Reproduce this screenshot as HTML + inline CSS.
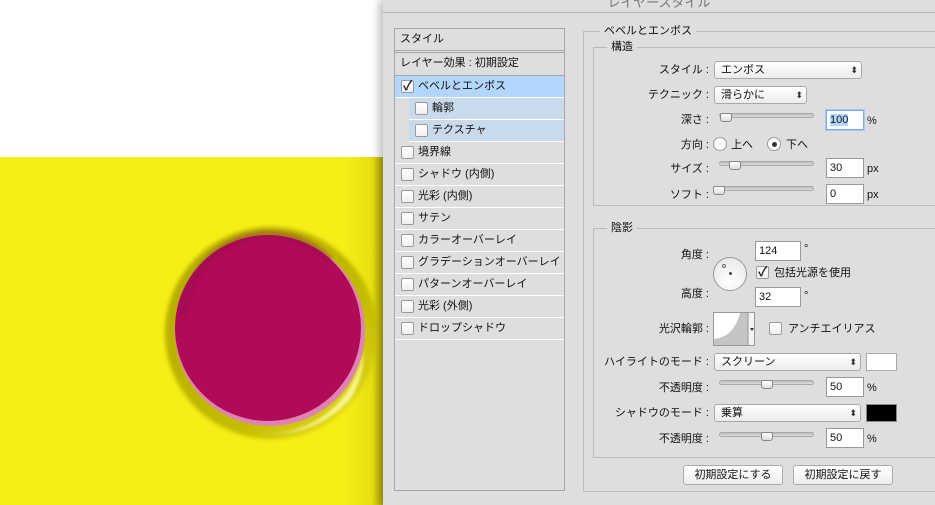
<!DOCTYPE html>
<html><head><meta charset="utf-8"><style>
*{margin:0;padding:0;box-sizing:border-box}
body{width:935px;height:505px;position:relative;overflow:hidden;background:#fff;font-family:"Liberation Sans","Noto Sans CJK JP",sans-serif;font-size:11px;color:#111}
.a{position:absolute}
#yel{left:0;top:157px;width:383px;height:348px;background:linear-gradient(90deg,#f7ee16 0,#f7ee16 345px,#e8df10 372px,#b8b000 383px)}
#dlg{left:383px;top:0;width:552px;height:505px;background:#dedede;box-shadow:-4px 0 8px rgba(0,0,0,.25)}
.title{left:0;top:0;width:552px;height:13px;border-bottom:1px solid #b5b5b5;text-align:center;font-size:13px;line-height:6px;color:#777;overflow:hidden}
#list{left:11px;top:28px;width:171px;height:463px;border:1px solid #a6a6a6;background:#dedede}
.row{position:absolute;left:0;width:169px;height:22px;border-bottom:1px solid #fff;line-height:21px;font-size:11px}
.cb{position:absolute;width:13px;height:13px;border:1px solid #9a9a9a;border-radius:2px;background:linear-gradient(#fff,#f0f0f0);top:4px}
.fs{border:1px solid #bbb}
.lg{position:absolute;background:#dedede;padding:0 4px;font-size:11px;line-height:12px}
.lbl{position:absolute;text-align:right;width:130px;font-size:11px;line-height:14px}
.sel{position:absolute;height:18px;border:1px solid #a9a9a9;border-radius:3px;background:linear-gradient(#fff,#ececec);font-size:11px;line-height:16px;padding-left:6px}
.sel:after{content:"⬍";position:absolute;right:3px;top:0;font-size:9px;color:#333}
.inp{position:absolute;height:20px;border:1px solid #999;background:#fff;font-size:11px;line-height:18px;padding-left:3px}
.sl{position:absolute;height:5px;border:1px solid #aaa;border-radius:3px;background:linear-gradient(#bbb,#ddd)}
.th{position:absolute;width:12px;height:9px;border:1px solid #888;border-radius:2px 2px 3px 3px;background:linear-gradient(#fff,#ddd)}
.u{position:absolute;font-size:11px;line-height:14px}
.btn{position:absolute;height:20px;border:1px solid #aaa;border-radius:3px;background:linear-gradient(#fff,#eee);text-align:center;line-height:18px;font-size:11px}
.rad{position:absolute;width:14px;height:14px;border:1px solid #999;border-radius:50%;background:#fff}
.ck{position:absolute;font-size:13px;line-height:13px;font-weight:bold;color:#222}
</style></head><body>
<div class="a" id="yel"></div>
<svg class="a" style="left:150px;top:210px" width="240" height="240">
<defs>
<filter id="b" x="-20%" y="-20%" width="140%" height="140%"><feGaussianBlur stdDeviation="2"/></filter>
<filter id="b2" x="-20%" y="-20%" width="140%" height="140%"><feGaussianBlur stdDeviation="1.5"/></filter>
<linearGradient id="o" x1="0" y1="0" x2="1" y2="1"><stop offset="0" stop-color="#b0a800"/><stop offset=".65" stop-color="#c4bc00"/><stop offset="1" stop-color="#e6de20"/></linearGradient>
</defs>
<circle cx="121" cy="123" r="106" fill="url(#o)" filter="url(#b)"/>
<path d="M213 140 A96 96 0 0 1 100 222 Q160 232 200 190 Q215 165 213 140Z" fill="#fbf690" filter="url(#b2)"/>
<circle cx="120" cy="121" r="95" fill="#e083b4"/>
<circle cx="118" cy="118" r="93" fill="#b00b57"/>
<path d="M34 108 A85 85 0 0 1 180 50" stroke="#8f0848" stroke-width="7" fill="none" opacity=".35" filter="url(#b2)"/>
</svg>
<div class="a" id="dlg">
<div class="a title">レイヤースタイル</div>
<div class="a" id="list">
<div class="row" style="top:0;height:24px;border-bottom:3px double #a6a6a6;padding-left:5px">スタイル</div>
<div class="row" style="top:24px;height:23px;border-bottom:1px solid #a6a6a6;padding-left:5px">レイヤー効果 : 初期設定</div>
<div class="row" style="top:47px;background:#b3d6fd;padding-left:23px"><div class="cb" style="left:6px"></div><span class="ck" style="left:8px;top:3px">✓</span>ベベルとエンボス</div>
<div class="row" style="top:69px;background:#c9daed;left:14px;width:155px;padding-left:23px"><div class="cb" style="left:6px"></div>輪郭</div>
<div class="row" style="top:91px;background:#c9daed;left:14px;width:155px;padding-left:23px"><div class="cb" style="left:6px"></div>テクスチャ</div>
<div class="row" style="top:113px;padding-left:23px"><div class="cb" style="left:6px"></div>境界線</div>
<div class="row" style="top:135px;padding-left:23px"><div class="cb" style="left:6px"></div>シャドウ (内側)</div>
<div class="row" style="top:157px;padding-left:23px"><div class="cb" style="left:6px"></div>光彩 (内側)</div>
<div class="row" style="top:179px;padding-left:23px"><div class="cb" style="left:6px"></div>サテン</div>
<div class="row" style="top:201px;padding-left:23px"><div class="cb" style="left:6px"></div>カラーオーバーレイ</div>
<div class="row" style="top:223px;padding-left:23px"><div class="cb" style="left:6px"></div>グラデーションオーバーレイ</div>
<div class="row" style="top:245px;padding-left:23px"><div class="cb" style="left:6px"></div>パターンオーバーレイ</div>
<div class="row" style="top:267px;padding-left:23px"><div class="cb" style="left:6px"></div>光彩 (外側)</div>
<div class="row" style="top:289px;padding-left:23px"><div class="cb" style="left:6px"></div>ドロップシャドウ</div>
</div>
<div class="a fs" style="left:200px;top:31px;width:360px;height:461px"></div>
<div class="lg" style="left:217px;top:25px">ベベルとエンボス</div>
<div class="a fs" style="left:210px;top:47px;width:350px;height:159px"></div>
<div class="lg" style="left:224px;top:41px">構造</div>
<div class="a fs" style="left:210px;top:228px;width:350px;height:230px"></div>
<div class="lg" style="left:224px;top:222px">陰影</div>
</div>
<div class="lbl" style="left:579px;top:63px">スタイル :</div>
<div class="sel" style="left:714px;top:61px;width:148px">エンボス</div>
<div class="lbl" style="left:579px;top:88px">テクニック :</div>
<div class="sel" style="left:714px;top:86px;width:93px">滑らかに</div>
<div class="lbl" style="left:579px;top:113px">深さ :</div>
<div class="sl" style="left:719px;top:113px;width:95px"></div><div class="th" style="left:720px;top:113px"></div>
<div class="inp" style="left:826px;top:110px;width:38px;border-color:#7aaaf0;box-shadow:0 0 0 1px #a8c8f5"><span style="background:#b3d6fd">100</span></div><div class="u" style="left:867px;top:114px">%</div>
<div class="lbl" style="left:579px;top:138px">方向 :</div>
<div class="rad" style="left:713px;top:137px"></div><div class="u" style="left:731px;top:138px">上へ</div>
<div class="rad" style="left:767px;top:137px"></div><div class="a" style="left:772px;top:142px;width:5px;height:5px;border-radius:50%;background:#333"></div><div class="u" style="left:786px;top:138px">下へ</div>
<div class="lbl" style="left:579px;top:162px">サイズ :</div>
<div class="sl" style="left:719px;top:161px;width:95px"></div><div class="th" style="left:729px;top:161px"></div>
<div class="inp" style="left:826px;top:158px;width:38px">30</div><div class="u" style="left:867px;top:162px">px</div>
<div class="lbl" style="left:579px;top:188px">ソフト :</div>
<div class="sl" style="left:719px;top:186px;width:95px"></div><div class="th" style="left:713px;top:186px"></div>
<div class="inp" style="left:826px;top:184px;width:38px">0</div><div class="u" style="left:867px;top:188px">px</div>

<div class="lbl" style="left:579px;top:248px">角度 :</div>
<div class="inp" style="left:755px;top:241px;width:46px">124</div><div class="u" style="left:804px;top:242px">°</div>
<div class="a" style="left:713px;top:257px;width:34px;height:34px;border:1px solid #999;border-radius:50%;background:radial-gradient(circle at 50% 70%,#fff,#e4e4e4)"></div>
<div class="a" style="left:722px;top:264px;width:4px;height:4px;border:1px solid #666;border-radius:50%"></div>
<div class="a" style="left:729px;top:272px;width:3px;height:3px;background:#444;border-radius:50%"></div>
<div class="cb" style="left:756px;top:266px"></div><span class="ck" style="left:758px;top:265px">✓</span><div class="u" style="left:774px;top:266px">包括光源を使用</div>
<div class="lbl" style="left:579px;top:287px">高度 :</div>
<div class="inp" style="left:755px;top:287px;width:46px">32</div><div class="u" style="left:804px;top:289px">°</div>
<div class="lbl" style="left:579px;top:322px">光沢輪郭 :</div>
<div class="a" style="left:713px;top:312px;width:42px;height:34px;border:1px solid #999;background:#fff;overflow:hidden"><svg width="42" height="34"><path d="M0 34 L0 26 Q20 24 26 0 L34 0 L34 34Z" fill="#c4c4c4"/><rect x="34" y="0" width="8" height="34" fill="#f4f4f4"/><line x1="34" y1="0" x2="34" y2="34" stroke="#999"/><path d="M36 15 l4 0 l-2 3z" fill="#333"/></svg></div>
<div class="cb" style="left:769px;top:322px"></div><div class="u" style="left:788px;top:322px">アンチエイリアス</div>
<div class="lbl" style="left:579px;top:355px">ハイライトのモード :</div>
<div class="sel" style="left:714px;top:353px;width:147px">スクリーン</div>
<div class="a" style="left:866px;top:353px;width:31px;height:18px;border:1px solid #aaa;background:#fff"></div>
<div class="lbl" style="left:579px;top:381px">不透明度 :</div>
<div class="sl" style="left:719px;top:380px;width:95px"></div><div class="th" style="left:761px;top:380px"></div>
<div class="inp" style="left:826px;top:377px;width:38px">50</div><div class="u" style="left:867px;top:381px">%</div>
<div class="lbl" style="left:579px;top:406px">シャドウのモード :</div>
<div class="sel" style="left:714px;top:404px;width:147px">乗算</div>
<div class="a" style="left:866px;top:404px;width:31px;height:18px;border:1px solid #888;background:#000"></div>
<div class="lbl" style="left:579px;top:432px">不透明度 :</div>
<div class="sl" style="left:719px;top:432px;width:95px"></div><div class="th" style="left:761px;top:432px"></div>
<div class="inp" style="left:826px;top:428px;width:38px">50</div><div class="u" style="left:867px;top:432px">%</div>
<div class="btn" style="left:683px;top:465px;width:100px">初期設定にする</div>
<div class="btn" style="left:793px;top:465px;width:100px">初期設定に戻す</div>
</body></html>
